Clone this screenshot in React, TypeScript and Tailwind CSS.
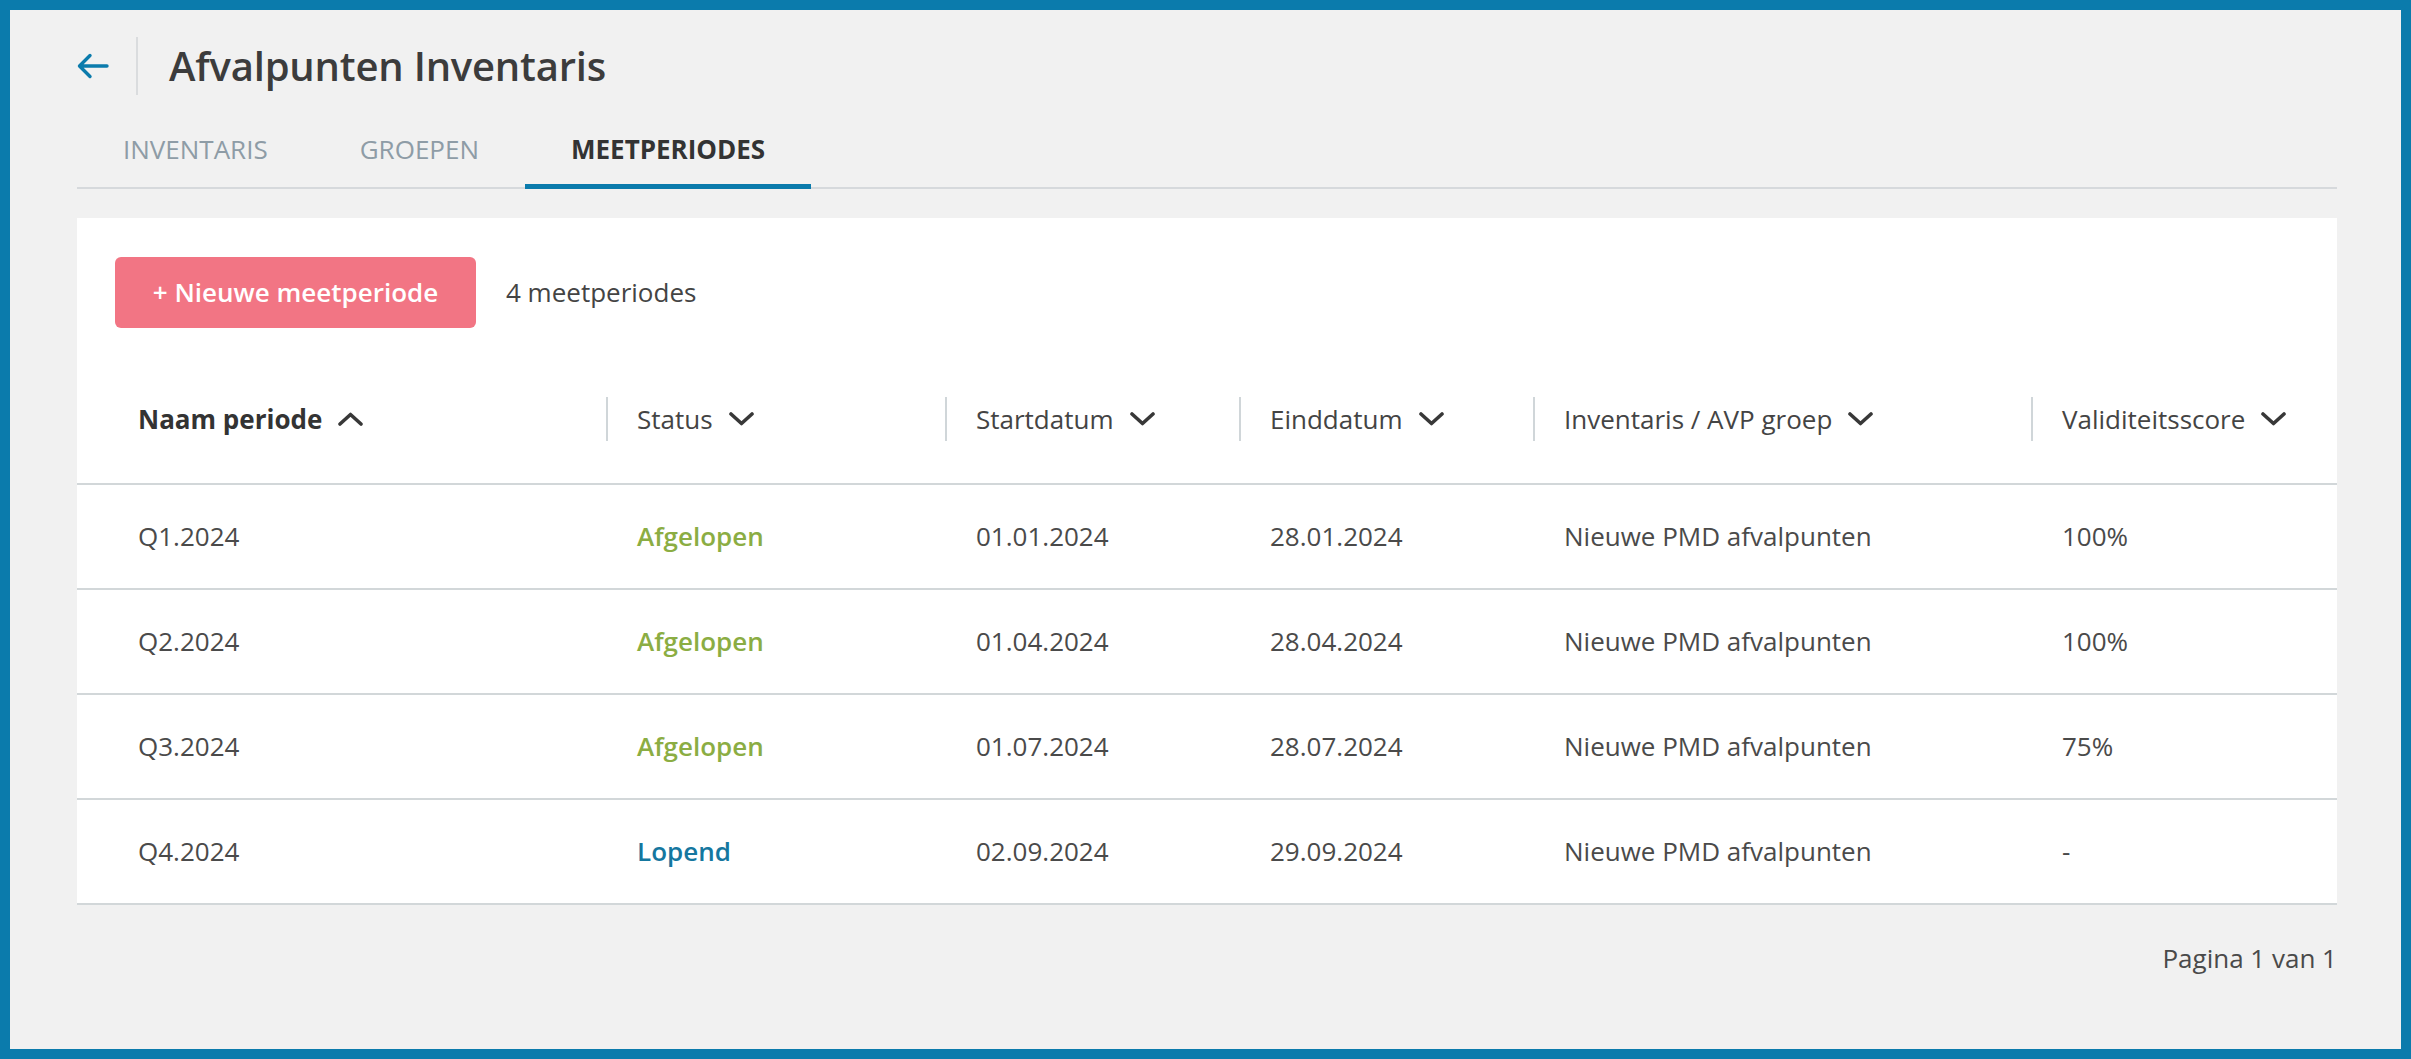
import React from 'react';

type Status = 'Afgelopen' | 'Lopend';

interface Periode {
  naam: string;
  status: Status;
  start: string;
  eind: string;
  groep: string;
  score: string;
}

const periodes: Periode[] = [
  { naam: 'Q1.2024', status: 'Afgelopen', start: '01.01.2024', eind: '28.01.2024', groep: 'Nieuwe PMD afvalpunten', score: '100%' },
  { naam: 'Q2.2024', status: 'Afgelopen', start: '01.04.2024', eind: '28.04.2024', groep: 'Nieuwe PMD afvalpunten', score: '100%' },
  { naam: 'Q3.2024', status: 'Afgelopen', start: '01.07.2024', eind: '28.07.2024', groep: 'Nieuwe PMD afvalpunten', score: '75%' },
  { naam: 'Q4.2024', status: 'Lopend', start: '02.09.2024', eind: '29.09.2024', groep: 'Nieuwe PMD afvalpunten', score: '-' },
];

const Chevron = ({ up = false }: { up?: boolean }) => (
  <svg width="25" height="14" viewBox="0 0 25 14" fill="none" className="ml-[16px] shrink-0">
    <polyline
      points={up ? '2,12 12.5,2.5 23,12' : '2,2 12.5,11.5 23,2'}
      stroke="#383838"
      strokeWidth="3.6"
      strokeLinecap="round"
      strokeLinejoin="round"
    />
  </svg>
);

const BackArrow = () => (
  <svg width="32" height="26" viewBox="0 0 32 26" fill="none">
    <path d="M30 13H3M13 2.5L2.5 13L13 23.5" stroke="#0b7bac" strokeWidth="3.4" strokeLinecap="round" strokeLinejoin="round" />
  </svg>
);

const tabs = ['INVENTARIS', 'GROEPEN', 'MEETPERIODES'];

export default function App() {
  const active = 'MEETPERIODES';

  return (
    <div
      className="w-[2411px] h-[1059px] border-[10px] border-[#0b7bac] bg-[#f1f1f1] pl-[67px] pr-[64px] pt-[27px] text-[#444]"
      style={{ fontFamily: '"Open Sans", "Noto Sans", sans-serif' }}
    >
      {/* header */}
      <div className="flex items-center h-[58px]">
        <BackArrow />
        <div className="w-[2px] h-[58px] bg-[#dadcde] ml-[27px] mr-[31px]" />
        <h1 className="text-[40px] font-semibold text-[#3c3c3c] leading-none tracking-[-0.2px]">Afvalpunten Inventaris</h1>
      </div>

      {/* tabs */}
      <div className="flex mt-[36px] border-b-2 border-[#d6d9dc]">
        {tabs.map((t) => (
          <div
            key={t}
            className={
              t === active
                ? 'px-[46px] pb-[15px] text-[26px] leading-[36px] font-bold text-[#333] border-b-[5px] border-[#0b7bac] -mb-[2px]'
                : 'px-[46px] pb-[20px] text-[26px] leading-[36px] text-[#8e9ca6]'
            }
          >
            {t}
          </div>
        ))}
      </div>

      {/* card */}
      <div className="bg-white mt-[29px]">
        <div className="flex items-center px-[38px] pt-[39px]">
          <button className="w-[361px] h-[71px] rounded-[6px] bg-[#f27584] text-white text-[26px] font-semibold">
            + Nieuwe meetperiode
          </button>
          <span className="ml-[30px] text-[26px] text-[#444]">4 meetperiodes</span>
        </div>

        <div className="grid grid-cols-[529px_339px_294px_294px_498px_1fr] pt-[69px] pb-[42px] border-b-2 border-[#d2d7d9]">
          <div className="flex items-center h-[44px] pl-[61px] text-[26px] font-bold text-[#333]">
            Naam periode
            <Chevron up />
          </div>
          {['Status', 'Startdatum', 'Einddatum', 'Inventaris / AVP groep', 'Validiteitsscore'].map((h) => (
            <div key={h} className="flex items-center h-[44px] pl-[29px] border-l-2 border-[#d0d6d9] text-[26px] text-[#444]">
              {h}
              <Chevron />
            </div>
          ))}
        </div>

        {periodes.map((p) => (
          <div
            key={p.naam}
            className="grid grid-cols-[529px_339px_294px_294px_498px_1fr] items-center h-[105px] border-b-2 border-[#d2d7d9] text-[26px] text-[#4a4a4a]"
          >
            <div className="pl-[61px]">{p.naam}</div>
            <div className={`pl-[31px] font-semibold ${p.status === 'Lopend' ? 'text-[#15779f]' : 'text-[#8bad43]'}`}>
              {p.status}
            </div>
            <div className="pl-[31px]">{p.start}</div>
            <div className="pl-[31px]">{p.eind}</div>
            <div className="pl-[31px]">{p.groep}</div>
            <div className="pl-[31px]">{p.score}</div>
          </div>
        ))}
      </div>

      <div className="flex justify-end mt-[34px] text-[26px] text-[#4a4a4a]">Pagina 1 van 1</div>
    </div>
  );
}
